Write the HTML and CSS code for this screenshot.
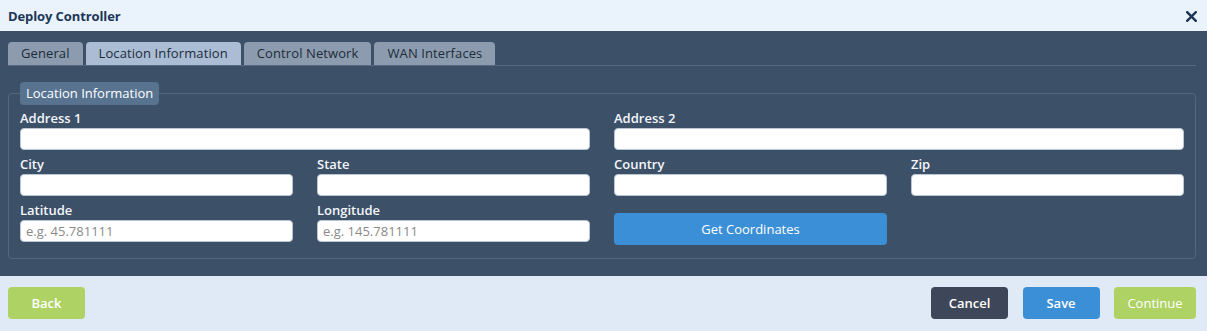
FILE: index.html
```html
<!DOCTYPE html>
<html>
<head>
<meta charset="utf-8">
<link rel="stylesheet" href="styles.css">
</head>
<body>
<div class="dialog">
  <div class="header">
    <span class="title">Deploy Controller</span>
    <span class="close"><svg width="11" height="11" viewBox="0 0 11 11"><path d="M1.2 1.2 L9.8 9.8 M9.8 1.2 L1.2 9.8" stroke="#1c3655" stroke-width="2.4" stroke-linecap="square"/></svg></span>
  </div>
  <div class="content">
    <div class="tabs">
      <div class="tab">General</div>
      <div class="tab active">Location Information</div>
      <div class="tab">Control Network</div>
      <div class="tab">WAN Interfaces</div>
    </div>
    <fieldset class="group">
      <legend class="legend">Location Information</legend>
      <div class="grid">
        <div class="field span2"><label class="label">Address 1</label><input class="input" type="text"></div>
        <div class="field span2"><label class="label">Address 2</label><input class="input" type="text"></div>
        <div class="field"><label class="label">City</label><input class="input" type="text"></div>
        <div class="field"><label class="label">State</label><input class="input" type="text"></div>
        <div class="field"><label class="label">Country</label><input class="input" type="text"></div>
        <div class="field"><label class="label">Zip</label><input class="input" type="text"></div>
        <div class="field"><label class="label">Latitude</label><input class="input" type="text" placeholder="e.g. 45.781111"></div>
        <div class="field"><label class="label">Longitude</label><input class="input" type="text" placeholder="e.g. 145.781111"></div>
        <div class="field"><button class="btn btn-blue coords">Get Coordinates</button></div>
      </div>
    </fieldset>
  </div>
  <div class="footer">
    <button class="btn btn-green fbtn">Back</button>
    <div class="actions">
      <button class="btn btn-dark fbtn">Cancel</button>
      <button class="btn btn-blue fbtn">Save</button>
      <button class="btn btn-green fbtn cont">Continue</button>
    </div>
  </div>
</div>
</body>
</html>
```
FILE: styles.css
```css
html, body {
  margin: 0;
  padding: 0;
}
body {
  font-family: "Open Sans", "Noto Sans", sans-serif;
  font-size: 13px;
  background: #3c5068;
  width: 1207px;
  height: 331px;
  overflow: hidden;
}
.dialog {
  display: flex;
  flex-direction: column;
  height: 331px;
}
.header {
  height: 31px;
  background: #eaf3fc;
  display: flex;
  align-items: center;
  justify-content: space-between;
  padding: 0 10px 0 8px;
}
.title {
  font-weight: 700;
  font-size: 13px;
  color: #1c3655;
  letter-spacing: -0.1px;
}
.close {
  display: flex;
  margin-top: 2px;
}
.content {
  background: #3c5068;
  padding: 11px 11px 17px 8px;
}
.tabs {
  display: flex;
  gap: 3px;
  border-bottom: 1px solid #55697f;
  height: 23px;
}
.tab {
  background: #8c9cae;
  color: #1d2b3b;
  padding: 0 13px;
  line-height: 23px;
  border-radius: 4px 4px 0 0;
  font-size: 13px;
  letter-spacing: 0.1px;
}
.tab.active {
  background: #aabdd4;
}
.group {
  margin: 16px 0 0 0;
  border: 1px solid #53677e;
  border-radius: 4px;
  padding: 5px 11px 13px 11px;
  min-width: 0;
}
.legend {
  background: #577390;
  color: #ffffff;
  font-weight: 400;
  padding: 0 6px;
  line-height: 23px;
  border-radius: 4px;
  font-size: 13px;
}
.grid {
  display: grid;
  grid-template-columns: repeat(4, 1fr);
  column-gap: 24px;
  row-gap: 6px;
}
.field {
  display: flex;
  flex-direction: column;
}
.span2 {
  grid-column: span 2;
}
.label {
  color: #f3f6fa;
  font-weight: 600;
  font-size: 13px;
  line-height: 16px;
  margin-bottom: 2px;
}
.input {
  box-sizing: border-box;
  height: 22px;
  border: 1px solid #b9c6d4;
  border-radius: 4px;
  background: #fff;
  padding: 0 5px;
  font-family: "Open Sans", "Noto Sans", sans-serif;
  font-size: 13px;
  outline: none;
}
.input::placeholder {
  color: #8a8a8a;
}
.btn {
  border: none;
  border-radius: 4px;
  color: #fff;
  font-family: "Open Sans", "Noto Sans", sans-serif;
  font-size: 13px;
  font-weight: 600;
  height: 32px;
  padding: 0;
}
.btn-blue { background: #3b8fd6; }
.btn-green { background: #aed264; }
.btn-dark { background: #3e4659; }
.coords {
  margin-top: 11px;
  width: 100%;
  font-weight: 400;
}
.footer {
  flex: 1;
  background: #dfeaf6;
  display: flex;
  justify-content: space-between;
  align-items: flex-start;
  padding: 11px 11px 0 8px;
}
.actions {
  display: flex;
  gap: 14.5px;
}
.fbtn {
  width: 77px;
}
.cont {
  width: 82px;
  font-weight: 400;
}
```
